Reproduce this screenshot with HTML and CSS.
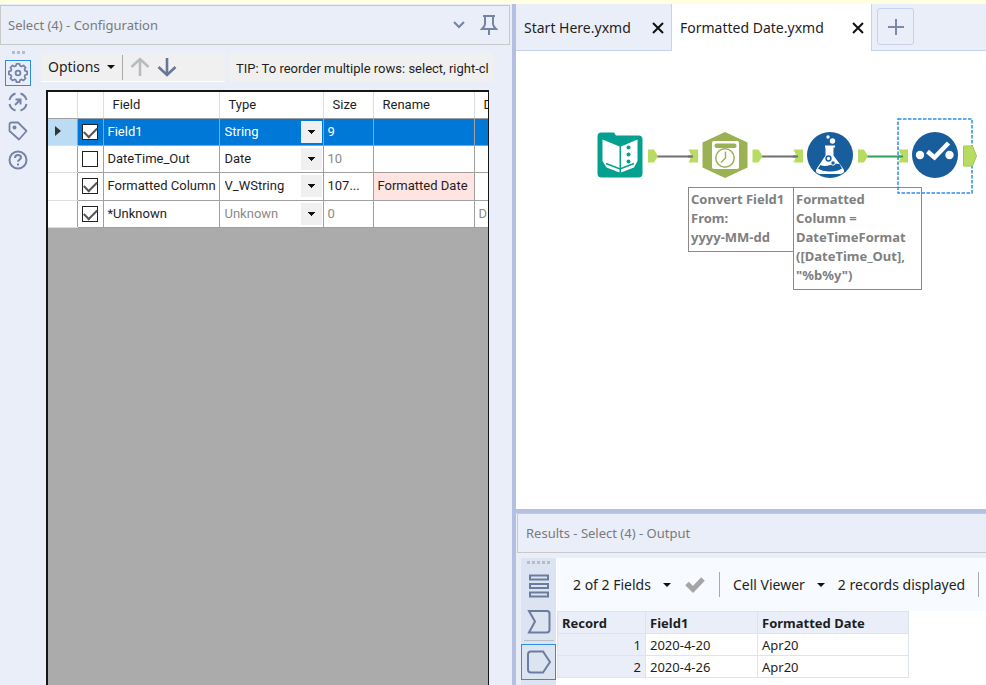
FILE: index.html
```html
<!DOCTYPE html>
<html lang="en">
<head>
<meta charset="utf-8">
<title>Formatted Date.yxmd</title>
<link rel="stylesheet" href="styles.css">
</head>
<body>
<div class="app">
  <section class="config">
    <header class="pane-title">
      <h2>Select (4) - Configuration</h2>
      <button class="icon-btn" aria-label="Collapse"><svg width="14" height="10" viewBox="0 0 14 10"><path d="M2 2l5 5 5-5" fill="none" stroke="#7483a6" stroke-width="2"/></svg></button>
      <button class="icon-btn" aria-label="Pin"><svg width="18" height="22" viewBox="0 0 18 22"><path d="M3 2h12M5 2v8q0 2-3 5h14q-3-3-3-5V2M9 15v6" fill="none" stroke="#7483a6" stroke-width="2"/></svg></button>
    </header>
    <div class="config-body">
      <nav class="rail" aria-label="Configuration views">
        <span class="grip"><i></i><i></i><i></i></span>
        <button class="rail-btn active" aria-label="Settings"><svg width="20" height="20" viewBox="0 0 20 20" fill="none" stroke="#7483a6" stroke-width="1.8" stroke-linejoin="round"><path d="M8.400 1.500h3.200l.600 2.200 1.500.600 2-1.100 2.200 2.200-1.100 2 .600 1.500 2.100.500v3.200l-2.100.500-.600 1.500 1.100 2-2.200 2.200-2-1.100-1.500.600-.600 2.200H8.400l-.600-2.200-1.500-.600-2 1.100-2.200-2.200 1.100-2-.600-1.500-2.100-.500V9.400l2.100-.500.600-1.500-1.100-2 2.200-2.200 2 1.100 1.500-.600z" transform="translate(.4 -.6) scale(.96)"/><circle cx="10" cy="10" r="2.400"/></svg></button>
        <button class="rail-btn" aria-label="Navigation"><svg width="20" height="20" viewBox="0 0 20 20" fill="none" stroke="#7483a6" stroke-width="2"><path d="M12.500 1.500A9 9 0 0 1 18.500 8M18.500 12A9 9 0 0 1 12.500 18.500M7.500 18.500A9 9 0 0 1 1.500 12M1.500 8A9 9 0 0 1 7.500 1.500M7 13l5-5M7.500 7.500H12.500V12.500"/></svg></button>
        <button class="rail-btn" aria-label="Annotation"><svg width="20" height="20" viewBox="0 0 20 20"><path d="M1.500 3.500q0-2 2-2H10l8.500 8.500-7.500 8.500L1.500 10z" fill="none" stroke="#7483a6" stroke-width="1.800" stroke-linejoin="round"/><circle cx="6.500" cy="6.500" r="2" fill="#7483a6"/></svg></button>
        <button class="rail-btn" aria-label="Help"><svg width="20" height="20" viewBox="0 0 20 20" fill="none" stroke="#7483a6" stroke-width="2"><circle cx="10" cy="10" r="8.500"/><path d="M7 8q0-3 3-3t3 2.600c0 2-3 2-3 4.200M10 13.500v2"/></svg></button>
      </nav>
      <div class="config-main">
        <div class="options-row">
          <div class="tools">
            <button class="menu-btn">Options<span class="caret"></span></button>
            <span class="rule"></span>
            <button class="icon-btn" aria-label="Move up" disabled><svg width="20" height="20" viewBox="0 0 20 20"><path d="M10 19V2M1.500 10L10 2l8.500 8" fill="none" stroke="#b8bbc0" stroke-width="2.600"/></svg></button>
            <button class="icon-btn" aria-label="Move down"><svg width="20" height="20" viewBox="0 0 20 20"><path d="M10 1v17M1.500 10L10 18l8.500-8" fill="none" stroke="#667799" stroke-width="2.600"/></svg></button>
          </div>
          <p class="tip">TIP: To reorder multiple rows: select, right-cl</p>
        </div>
        <div class="grid-box">
          <table class="fields">
            <colgroup><col class="c-mark"><col class="c-check"><col class="c-field"><col class="c-type"><col class="c-size"><col class="c-rename"><col class="c-desc"></colgroup>
            <thead><tr><th></th><th></th><th>Field</th><th>Type</th><th>Size</th><th>Rename</th><th>D</th></tr></thead>
            <tbody>
              <tr class="selected"><td class="mark"><span class="pointer"></span></td><td class="check"><input type="checkbox" checked aria-label="Field1"></td><td>Field1</td><td class="type"><select aria-label="Type of Field1"><option>String</option></select></td><td>9</td><td></td><td></td></tr>
              <tr><td></td><td class="check"><input type="checkbox" aria-label="DateTime_Out"></td><td>DateTime_Out</td><td class="type"><select aria-label="Type of DateTime_Out"><option>Date</option></select></td><td class="dim">10</td><td></td><td></td></tr>
              <tr><td></td><td class="check"><input type="checkbox" checked aria-label="Formatted Column"></td><td>Formatted Column</td><td class="type"><select aria-label="Type of Formatted Column"><option>V_WString</option></select></td><td>107...</td><td class="renamed">Formatted Date</td><td></td></tr>
              <tr><td></td><td class="check"><input type="checkbox" checked aria-label="Unknown"></td><td>*Unknown</td><td class="type dim"><select aria-label="Type of Unknown"><option>Unknown</option></select></td><td class="dim">0</td><td></td><td class="dim">D</td></tr>
            </tbody>
          </table>
        </div>
      </div>
    </div>
  </section>

  <main class="work">
    <div class="tabs">
      <div class="tab"><a href="#start">Start Here.yxmd</a><button class="close" aria-label="Close Start Here"><svg width="12" height="12" viewBox="0 0 12 12"><path d="M1 1l10 10M11 1L1 11" stroke="#111" stroke-width="2"/></svg></button></div>
      <div class="tab current"><a href="#formatted">Formatted Date.yxmd</a><button class="close" aria-label="Close Formatted Date"><svg width="12" height="12" viewBox="0 0 12 12"><path d="M1 1l10 10M11 1L1 11" stroke="#111" stroke-width="2"/></svg></button></div>
      <button class="new-tab" aria-label="New tab"><svg width="16" height="16" viewBox="0 0 16 16"><path d="M8 0v16M0 8h16" stroke="#7a8aa8" stroke-width="2"/></svg></button>
    </div>
    <div class="canvas">
      <div class="note note-date">Convert Field1 From:<br>yyyy-MM-dd</div>
      <div class="note note-formula">Formatted<br>Column =<br>DateTimeFormat<br>([DateTime_Out],<br>"%b%y")</div>
      <svg class="selection" width="76" height="76" viewBox="0 0 76 76"><rect x="1" y="1" width="74" height="74" fill="none" stroke="#2b8ee6" stroke-width="1.500" stroke-dasharray="3.500 1.500"/></svg>
      <svg class="wires" width="470" height="200" viewBox="516 51 470 200">
        <g fill="none" stroke-width="2"><path d="M656 156.500h38M761 156.500h38" stroke="#6f6f6f"/><path d="M866 156.500h38" stroke="#2fa05a"/></g>
        <g fill="#b8dc62">
          <path d="M648 149.500h6l4 6.500-4 6.500h-6zM752.500 149.500h6l4 6.500-4 6.500h-6zM858 149.500h6l4 6.500-4 6.500h-6z"/>
          <path d="M688.500 149.500h9.500v13h-9.500l3-6.500zM793.500 149.500h9.500v13h-9.500l3-6.500zM898.500 149.500h9.500v13h-9.500l3-6.500z"/>
          <path d="M963.500 146h9l4 10-4 10h-9z" stroke="#9ccb4a"/>
        </g>
        <path d="M688 156.500h5M793 156.500h5" stroke="#6f6f6f" stroke-width="2"/><path d="M898 156.500h5" stroke="#2fa05a" stroke-width="2"/>
      </svg>
      <svg class="node node-input" width="46" height="46" viewBox="0 0 46 46"><path d="M4 .500h13l2 3h22.500q4 0 4 4V41.500q0 4-4 4H4.500q-4 0-4-4V4.500q0-4 4-4z" fill="#04a08f"/><path d="M5.500 7.500L22.500 14.500V40.500L9.500 35.500 5.500 29zM24 14.500L40.500 7.500V29L37 35.500 24 40.500z" fill="#fff"/><path d="M9 31.500l14 5.500 14-5.500" fill="none" stroke="#04a08f" stroke-width="1.500"/><g fill="#04a08f"><circle cx="31.500" cy="15.500" r="2"/><circle cx="31.500" cy="22.500" r="2"/><circle cx="31.500" cy="29.500" r="2"/></g></svg>
      <svg class="node node-date" width="46" height="46" viewBox="0 0 46 46"><path d="M23 0l22.500 10.500v25L23 46 .500 35.500v-25z" fill="#9ab254"/><rect x="10" y="9" width="27" height="28" rx="2" fill="#fff"/><rect x="12.500" y="11.500" width="22" height="4.500" rx="2" fill="#9ab254"/><circle cx="23" cy="26" r="9.200" fill="none" stroke="#9ab254" stroke-width="1.500"/><path d="M23.500 19.500v6.500l-4.500 4.500" fill="none" stroke="#9ab254" stroke-width="1.500"/></svg>
      <svg class="node node-formula" width="46" height="46" viewBox="0 0 46 46"><circle cx="23" cy="23" r="23" fill="#185e9c"/><path d="M18 13.500h10v2h-1.500v8l10 13.500q2 4-3 5H12.500q-5-1-3-5l9-13.500v-8H18z" fill="#fff"/><path d="M13.500 33q4 2 9.500 0t9.500-1l2.500 4.500q-4 3-12 3t-12-3z" fill="#185e9c"/><circle cx="21.500" cy="26.500" r="2.400" fill="#fff" stroke="#185e9c" stroke-width="1.500"/><circle cx="26" cy="31" r="2.200" fill="#185e9c" stroke="#fff"/><circle cx="25.500" cy="9" r="2.700" fill="#fff"/><circle cx="21" cy="5" r="1.700" fill="#fff"/></svg>
      <svg class="node node-select" width="46" height="46" viewBox="0 0 46 46"><circle cx="23" cy="23" r="23" fill="#185e9c"/><circle cx="8" cy="23" r="4.200" fill="#fff"/><circle cx="37.500" cy="23" r="4.200" fill="#fff"/><path d="M15.500 19.500l7 6L36.500 11" fill="none" stroke="#fff" stroke-width="4.500"/></svg>
    </div>
    <section class="results">
      <header class="pane-title"><h2>Results - Select (4) - Output</h2></header>
      <div class="results-body">
        <nav class="out-rail" aria-label="Result views">
          <span class="grip"><i></i><i></i><i></i><i></i><i></i></span>
          <button class="out-btn" aria-label="Messages"><svg width="22" height="24" viewBox="0 0 22 24" fill="none" stroke="#6c7c9f" stroke-width="2"><rect x="2" y="1.500" width="18" height="4"/><rect x="2" y="10" width="18" height="4"/><rect x="2" y="18.500" width="18" height="4"/></svg></button>
          <button class="out-btn" aria-label="Input"><svg width="24" height="24" viewBox="0 0 24 24" fill="none" stroke="#6c7c9f" stroke-width="2"><path d="M2 1h18q2.500 0 2.500 2.500v16q0 3-2.500 3H2l6-11z"/></svg></button>
          <span class="out-rule"></span>
          <button class="out-btn active" aria-label="Output"><svg width="24" height="24" viewBox="0 0 24 24" fill="none" stroke="#6c7c9f" stroke-width="2"><path d="M4 1.500h12l7 10.500-7 10.500H4q-3 0-3-3v-15q0-3 3-3z"/></svg></button>
        </nav>
        <div class="out-main">
          <div class="out-tools">
            <button class="menu-btn">2 of 2 Fields<span class="caret"></span></button>
            <button class="icon-btn" aria-label="Apply"><svg width="22" height="18" viewBox="0 0 22 18"><path d="M3 7.500l6 6L19 3" fill="none" stroke="#a5a5a5" stroke-width="5"/></svg></button>
            <span class="rule"></span>
            <button class="menu-btn">Cell Viewer<span class="caret"></span></button>
            <span class="count">2 records displayed</span>
            <span class="rule"></span>
          </div>
          <table class="records">
            <thead><tr><th>Record</th><th>Field1</th><th>Formatted Date</th></tr></thead>
            <tbody>
              <tr><th>1</th><td>2020-4-20</td><td>Apr20</td></tr>
              <tr><th>2</th><td>2020-4-26</td><td>Apr20</td></tr>
            </tbody>
          </table>
        </div>
      </div>
    </section>
  </main>
</div>
</body>
</html>
```
FILE: styles.css
```css
* { box-sizing: border-box; }
body {
  margin: 0;
  background: #eaeef9;
  color: #1e1e1e;
  font: 14px/20px "Noto Sans", "Open Sans", sans-serif;
}
button, select, input { font: inherit; color: inherit; }
button { padding: 0; border: 0; background: none; }
svg { display: block; }

.app {
  display: grid;
  grid-template-columns: 512fr 474fr;
  height: 100vh;
  border-top: 4px solid #ffffe1;
  overflow: hidden;
}

.pane-title {
  display: flex;
  align-items: center;
  gap: 14px;
  height: 40px;
  padding: 0 11px 0 7px;
  border: 1px solid #c9c9c9;
}
.pane-title h2 {
  flex: 1;
  margin: 0;
  color: #7a7a7a;
  font-size: 13px;
  font-weight: 400;
}

/* Configuration pane */
.config { display: flex; flex-direction: column; min-width: 0; padding: 1px 2px 0 0; }
.config-body { display: flex; flex: 1; min-height: 0; }
.rail { display: flex; flex-direction: column; align-items: center; gap: 3px; width: 36px; padding-top: 6px; }
.grip { display: flex; gap: 2px; padding-bottom: 3px; }
.grip i { width: 3px; height: 3px; background: #b9bcc4; }
.rail-btn { display: grid; place-items: center; width: 26px; height: 26px; }
.rail-btn.active { border: 1px solid #2b8ee6; }

.config-main { display: flex; flex: 1; flex-direction: column; min-width: 0; padding: 8px 17px 0 5px; }
.options-row { display: flex; gap: 4px; margin-bottom: 8px; }
.tools {
  display: flex;
  align-items: center;
  gap: 7px;
  width: 184px;
  height: 29px;
  padding-left: 7px;
  background: #f0f0f0;
  border-bottom: 1px solid #fff;
}
.menu-btn { display: flex; align-items: center; gap: 7px; }
.caret { border: 4px solid transparent; border-top-color: #111; border-bottom: 0; }
.rule { width: 1px; height: 25px; background: #a9a9a9; }
.tip {
  flex: 1;
  margin: 0;
  padding: 6px 0 0 7px;
  overflow: hidden;
  background: #f0f0f0;
  font: 13px/20px Roboto, sans-serif;
  white-space: nowrap;
}

.grid-box {
  flex: 1;
  margin: 0 4px 0 5px;
  overflow: hidden;
  background: #ababab;
  border: 2px solid #161616;
  border-width: 2px 1px 0 2px;
}
.fields {
  width: 540px;
  height: 136px;
  table-layout: fixed;
  border-collapse: collapse;
  background: #fff;
  font: 13px/20px Roboto, sans-serif;
}
.c-mark { width: 29px; }
.c-check { width: 26px; }
.c-field { width: 116px; }
.c-type { width: 104px; }
.c-size { width: 50px; }
.c-rename { width: 101px; }
.fields th {
  height: 26px;
  padding: 0 9px;
  border-right: 1px solid #dedede;
  border-bottom: 1px solid #a0a0a0;
  font-weight: 400;
  text-align: left;
}
.fields td { padding: 0 4px; border: 1px solid #a0a0a0; white-space: nowrap; }
.fields td:first-child { border-left: 0; border-bottom-color: #dedede; }
.fields .check, .fields .mark { padding: 0; text-align: center; }
.fields .mark { padding-right: 8px; }
.fields .type { padding: 0 1px 0 5px; }
.fields .selected { background: #0078d7; color: #fff; }
.fields .selected .mark { background: #bcdcf4; }
.fields .renamed { background: #ffe4e1; }
.fields .dim { color: #8a8a8a; }
.pointer { display: inline-block; border: 5px solid transparent; border-left: 6px solid #333; border-right: 0; }
.fields input {
  display: block;
  width: 16px;
  height: 16px;
  margin: 0 auto;
  appearance: none;
  background: #fff;
  border: 1px solid #222;
}
.fields input:checked::after {
  display: block;
  width: 11px;
  height: 6px;
  margin: 2px 1px;
  border: solid #555;
  border-width: 0 0 2px 2px;
  content: "";
  transform: rotate(-45deg);
}
.fields select {
  display: block;
  width: 100%;
  height: 22px;
  padding: 0;
  appearance: none;
  border: 0;
  background:
    conic-gradient(from -45deg at 50% 100%, #111 90deg, transparent 0) right 7px center / 7px 4px no-repeat,
    linear-gradient(#f0f0f0, #f0f0f0) right / 21px 22px no-repeat;
}

/* Workflow tabs */
.work { display: flex; flex-direction: column; min-width: 0; border-left: 4px solid #b3c0e2; }
.tabs { display: flex; height: 47px; border-bottom: 1px solid #c7d3ea; }
.tab {
  display: flex;
  align-items: center;
  justify-content: space-between;
  width: 156px;
  height: 47px;
  padding: 1px 7px 0 8px;
  border-right: 1px solid #c7d3ea;
  font-size: 14px;
}
.tab.current { width: 200px; background: #fff; }
.tab a { color: inherit; text-decoration: none; }
.new-tab {
  display: grid;
  place-items: center;
  width: 37px;
  height: 37px;
  margin: 4px 5px;
  border: 1px solid #c7d3ea;
  border-radius: 3px;
}

/* Canvas: nodes sit at free positions */
.canvas { position: relative; flex: 1; overflow: hidden; background: #fff; }
.wires, .node, .note, .selection { position: absolute; }
.wires { left: 0; top: 0; }
.node { top: 81px; }
.node-input { left: 81px; }
.node-date { left: 186px; }
.node-formula { left: 291px; }
.node-select { left: 396px; }
.selection { left: 381px; top: 67px; }
.note {
  top: 136px;
  padding: 2px;
  border: 1px solid #8a8a8a;
  background: #fff;
  color: #808080;
  font-size: 13px;
  font-weight: 700;
  line-height: 19px;
}
.note-date { left: 172px; width: 106px; height: 65px; }
.note-formula { left: 277px; width: 129px; height: 103px; }

/* Results */
.results { height: 176px; border-top: 4px solid #b3c0e2; overflow: hidden; }
.results .pane-title { border-right: 0; margin-left: 1px; padding-left: 8px; }
.results-body { display: flex; height: 132px; padding: 5px 0 0 5px; }
.out-rail { display: flex; flex-direction: column; align-items: center; width: 35px; padding-top: 3px; background: #dce3f1; }
.out-rail .grip { padding-bottom: 4px; }
.out-btn { display: grid; place-items: center; width: 35px; height: 36px; }
.out-btn.active { border: 1px solid #2b8ee6; }
.out-rule { width: 30px; height: 4px; border-top: 1px solid #b9bcc4; }
.out-main { flex: 1; min-width: 0; padding-left: 1px; background: #fff; }
.out-tools { display: flex; align-items: center; gap: 13px; height: 53px; padding-left: 16px; background: #f7faff; white-space: nowrap; }
.out-tools .menu-btn { gap: 12px; }
.records { width: 352px; table-layout: fixed; border-collapse: collapse; font-size: 13px; line-height: 20px; }
.records th, .records td { height: 22px; padding: 0 4px; border: 1px solid #dce3f1; text-align: left; }
.records th { background: #eaeef9; }
.records th:first-child { width: 88px; }
.records th:nth-child(2) { width: 112px; }
.records tbody th { font-weight: 400; text-align: right; }
```
